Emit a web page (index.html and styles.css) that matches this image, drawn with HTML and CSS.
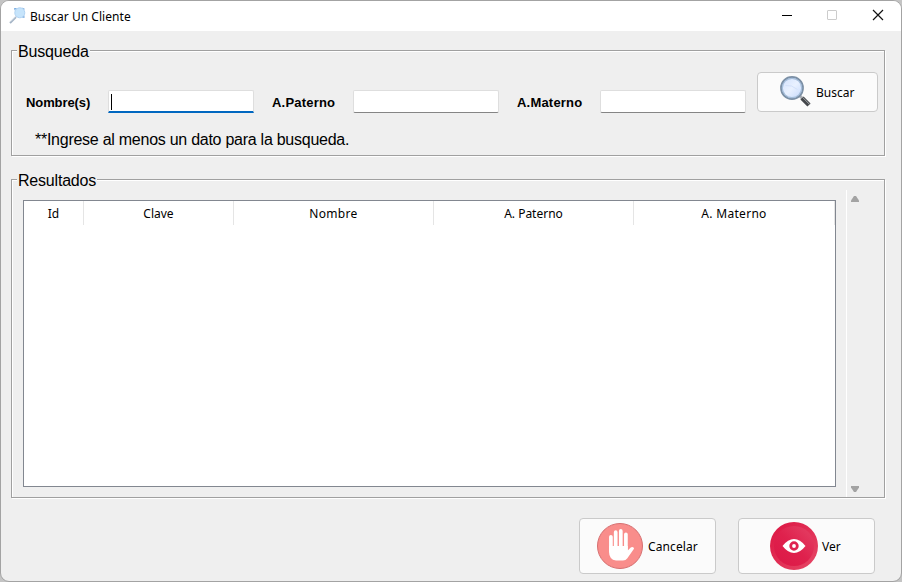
FILE: index.html
```html
<!DOCTYPE html>
<html lang="es">
<head>
<meta charset="utf-8">
<title>Buscar Un Cliente</title>
<link rel="stylesheet" href="styles.css">
</head>
<body>
<main class="window">
  <header class="titlebar">
    <svg class="app-icon" width="18" height="18" viewBox="0 0 18 18">
      <path d="M1 16 7 10" stroke="#a3b3c4" stroke-width="2"/>
      <path d="M1.500 14.700 6.500 9.700" stroke="#dfe8f0" stroke-width=".8"/>
      <circle cx="10.800" cy="5.800" r="5" fill="#c6e4fb" stroke="#b0d2f1" stroke-width="1"/>
      <path d="M5 1h3l-2.500 2.500zM13 .500l2.500 2.500V1.500zM13 10.500l2.500-2v2.500z" fill="#7fb0e2"/>
    </svg>
    <h1 class="title">Buscar Un Cliente</h1>
    <svg class="controls" width="112" height="30" viewBox="0 0 112 30" fill="none">
      <path d="M1 14.500h10" stroke="#000"/>
      <rect x="46.500" y="9.500" width="9" height="9" rx=".5" stroke="#ccc"/>
      <path d="m92 9 10 10M102 9 92 19" stroke="#111" stroke-width="1.200"/>
    </svg>
  </header>
  <section class="group search">
    <h2 class="legend busqueda">Busqueda</h2>
    <div class="fields">
      <label class="label name" for="nombre">Nombre(s)</label>
      <div class="entry focused" id="nombre"><i class="caret"></i></div>
      <label class="label paterno" for="paterno">A.Paterno</label>
      <div class="entry" id="paterno"></div>
      <label class="label materno" for="materno">A.Materno</label>
      <div class="entry" id="materno"></div>
      <button class="button find">
        <svg width="34" height="34" viewBox="0 0 34 34">
          <defs><linearGradient id="lens" x2="1" y2="1"><stop stop-color="#cfdffc"/><stop offset=".5" stop-color="#e9f1ff"/><stop offset="1" stop-color="#c3d7fb"/></linearGradient></defs>
          <path d="m20.500 20.500 3 3" stroke="#a9adb3" stroke-width="3"/>
          <path d="m23 23 7 7" stroke="#45484c" stroke-width="4.500"/>
          <path d="m23.500 22.300 7 7" stroke="#a0a3a6" stroke-width="1"/>
          <circle cx="13" cy="13" r="10.900" fill="url(#lens)" stroke="#7c90a6" stroke-width="2"/>
          <circle cx="13" cy="13" r="9.700" fill="none" stroke="#a5bedb" stroke-width="1.200"/>
          <path d="M6.500 10.500q6-1 12 4" fill="none" stroke="#d3e1fa"/>
        </svg><span>Buscar</span>
      </button>
    </div>
    <p class="hint">**Ingrese al menos un dato para la busqueda.</p>
  </section>
  <section class="group results">
    <h2 class="legend resultados">Resultados</h2>
    <div class="pane">
      <div class="table">
        <div class="head">
          <span>Id</span><span>Clave</span><span class="wide">Nombre</span><span>A. Paterno</span><span class="wide">A. Materno</span>
        </div>
      </div>
      <div class="scrollbar">
        <svg width="8" height="6" viewBox="0 0 8 6"><path d="M3 0h2l3 4.500V6H0V4.500z" fill="#a3a3a3"/></svg>
        <svg width="8" height="6" viewBox="0 0 8 6"><path d="M0 0h8v1.500L5 6H3L0 1.500z" fill="#a3a3a3"/></svg>
      </div>
    </div>
  </section>
  <footer class="actions">
    <button class="button action cancel">
      <svg width="48" height="48" viewBox="0 0 48 48">
        <circle cx="24" cy="24" r="22.500" fill="#f98d8b" stroke="#d66f70"/>
        <g fill="none" stroke="#fff" stroke-width="3.700" stroke-linecap="round"><path d="M14.900 14.800V29M19.700 10.200V29M24.800 8.900V29M29.900 12.300V29"/></g>
        <path d="M13.050 24h18.700v4.500l3-3q1.300-.8 2.800-.1.900.5.100 1.800l-6.300 9Q29.800 38.600 27 38.600h-7Q13.050 37.500 13.050 30z" fill="#fff"/>
      </svg><span>Cancelar</span>
    </button>
    <button class="button action view">
      <svg width="48" height="48" viewBox="0 0 48 48">
        <defs><linearGradient id="ruby" y2="1"><stop stop-color="#dc1442"/><stop offset="1" stop-color="#e64867"/></linearGradient><linearGradient id="rubyIn" x1="0" y1="1" x2="1" y2="0"><stop stop-color="#dc1746"/><stop offset=".5" stop-color="#df214d"/><stop offset="1" stop-color="#e44366"/></linearGradient></defs>
        <circle cx="24" cy="24" r="24" fill="url(#ruby)"/>
        <circle cx="24" cy="24" r="20" fill="url(#rubyIn)"/>
        <path d="M12.500 24Q18 17 24 17t11.500 7Q30 31 24 31t-11.500-7z" fill="#fff"/>
        <circle cx="24" cy="24" r="3.300" fill="none" stroke="#df2350" stroke-width="2.800"/>
      </svg><span>Ver</span>
    </button>
  </footer>
</main>
</body>
</html>
```
FILE: styles.css
```css
* { box-sizing: border-box; }
body { margin: 0; width: 902px; height: 582px; overflow: hidden; background: #c4c4c4; color: #000; font-family: "Noto Sans", sans-serif; font-size: 12px; }
h1, h2, p { margin: 0; font-weight: 400; }
svg { display: block; flex: none; }
.window { width: 902px; height: 582px; border: 1px solid #a3a3a3; border-radius: 9px; background: #efefef; overflow: hidden; padding-right: 1px; }
.titlebar { display: flex; height: 30px; width: 900px; padding-left: 8px; background: #fff; }
.app-icon { margin-top: 6px; }
.title { margin: 1px 0 0 3px; font-size: 12px; line-height: 30px; letter-spacing: .05px; }
.controls { margin-left: auto; margin-right: 8px; }
.group { width: 874px; margin-left: 10px; border: 1px solid #a0a0a0; box-shadow: 1px 1px 0 #fff, inset 1px 1px 0 #fff; }
.legend { height: 20px; margin: -10px 0 0 5px; padding: 1px 0 0 1px; background: #efefef; font: 16px/20px "Liberation Sans", sans-serif; white-space: nowrap; }
.busqueda { width: 73px; letter-spacing: -.15px; }
.resultados { width: 80px; letter-spacing: -.2px; }
.search { height: 106px; margin-top: 19px; }
.fields { display: flex; align-items: flex-start; padding: 11px 6px 0 14px; }
.label { width: 81px; margin: 21px 0 0 18px; font: bold 13px/20px "Liberation Sans", sans-serif; }
.name { width: 82px; margin-left: 0; letter-spacing: -.1px; }
.paterno { letter-spacing: .2px; }
.materno { width: 83px; letter-spacing: .2px; }
.entry { width: 146px; height: 23px; margin-top: 18px; padding: 3px 2px; border: 1px solid #dedede; border-bottom-color: #858585; border-radius: 2px; background: #fff; }
.focused { border-bottom: 2px solid #0067c0; border-radius: 2px 2px 0 0; }
.caret { display: block; width: 1px; height: 16px; background: #000; }
.button { display: flex; align-items: center; padding: 0; border: 1px solid #cacaca; border-radius: 4px; background: #fbfbfb; color: #000; font: 12px/18px "Noto Sans", sans-serif; }
.button span { padding-top: 2px; }
.find { width: 121px; height: 40px; margin-left: 11px; padding-left: 21px; gap: 3px; }
.hint { margin: 17px 0 0 23px; font: 16px/20px "Liberation Sans", sans-serif; letter-spacing: -.26px; }
.results { height: 319px; margin-top: 23px; }
.pane { display: flex; padding-left: 11px; }
.table { width: 813px; height: 287px; margin-top: 10px; border: 1px solid #828790; background: #fff; }
.head { display: grid; grid-template-columns: 60px 150px 200px 200px 201px; height: 24px; line-height: 24px; text-align: center; }
.head span { height: 24px; padding-top: 1px; border-right: 1px solid #e5e5e5; }
.head .wide { letter-spacing: .3px; }
.scrollbar { display: flex; flex-direction: column; justify-content: space-between; width: 18px; height: 307px; margin-left: 10px; padding: 6px 0 5px 4px; border-left: 1px solid #fff; }
.actions { display: flex; gap: 22px; margin: 20px 0 0 578px; }
.action { width: 137px; height: 56px; gap: 4px; }
.cancel { padding-left: 16px; letter-spacing: .1px; }
.view { padding-left: 31px; }
```
